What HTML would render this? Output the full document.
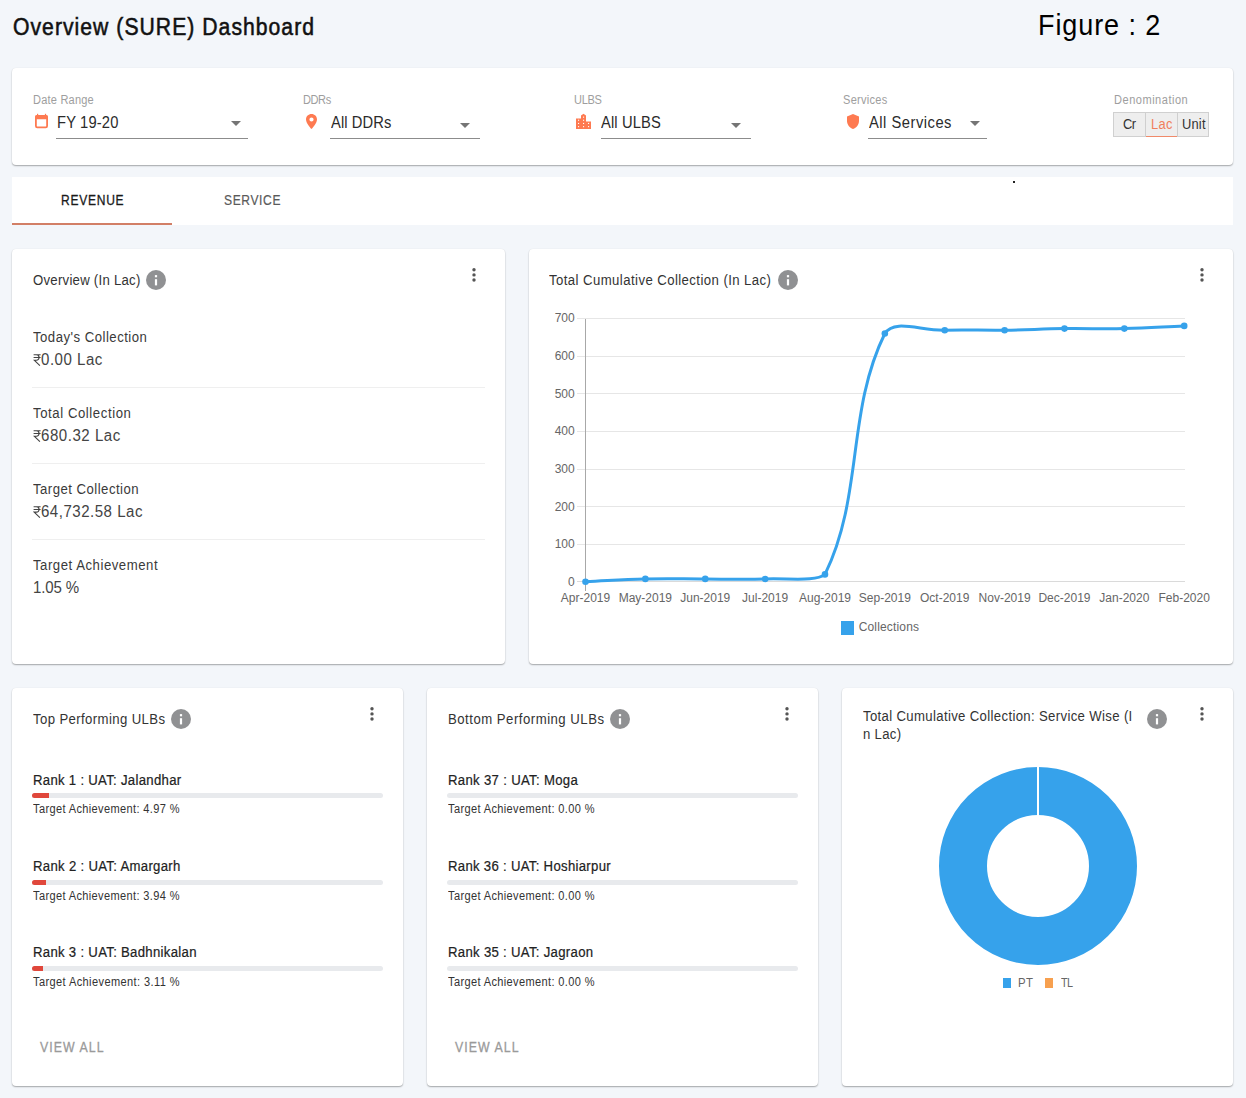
<!DOCTYPE html>
<html><head><meta charset="utf-8"><style>
html,body{margin:0;padding:0;}
body{width:1246px;height:1098px;background:#f3f6fa;position:relative;overflow:hidden;font-family:"Liberation Sans", sans-serif;}
.t{position:absolute;white-space:nowrap;}
</style></head><body>
<div class="t" style="left:13.00px;top:12.65px;font-size:23.5px;line-height:28.20px;color:#111;letter-spacing:1.148px;-webkit-text-stroke:0.55px #111;transform:scaleX(0.9);transform-origin:0 0;">Overview (SURE) Dashboard</div>
<div class="t" style="left:1038.40px;top:6.80px;font-size:30px;line-height:36.00px;color:#000;letter-spacing:1.021px;transform:scaleX(0.9);transform-origin:0 0;">Figure : 2</div>
<div style="position:absolute;left:12px;top:68px;width:1221px;height:97px;background:#fff;border-radius:4px;box-shadow:0 1px 1.5px rgba(0,0,0,.32),0 0 1px rgba(0,0,0,.08);"></div>
<div class="t" style="left:32.50px;top:92.94px;font-size:12px;line-height:14.40px;color:#9e9e9e;letter-spacing:0.220px;transform:scaleX(0.92);transform-origin:0 0;">Date Range</div>
<div class="t" style="left:303.10px;top:92.94px;font-size:12px;line-height:14.40px;color:#9e9e9e;letter-spacing:-0.449px;transform:scaleX(0.92);transform-origin:0 0;">DDRs</div>
<div class="t" style="left:573.50px;top:92.94px;font-size:12px;line-height:14.40px;color:#9e9e9e;letter-spacing:-0.361px;transform:scaleX(0.92);transform-origin:0 0;">ULBS</div>
<div class="t" style="left:843.40px;top:92.94px;font-size:12px;line-height:14.40px;color:#9e9e9e;letter-spacing:0.292px;transform:scaleX(0.92);transform-origin:0 0;">Services</div>
<div class="t" style="left:1113.70px;top:92.94px;font-size:12px;line-height:14.40px;color:#9e9e9e;letter-spacing:0.555px;transform:scaleX(0.92);transform-origin:0 0;">Denomination</div>
<div class="t" style="left:56.60px;top:112.65px;font-size:16px;line-height:19.20px;color:#2b2b2b;letter-spacing:0.161px;transform:scaleX(0.92);transform-origin:0 0;">FY 19-20</div>
<div class="t" style="left:330.80px;top:112.65px;font-size:16px;line-height:19.20px;color:#2b2b2b;letter-spacing:0.092px;transform:scaleX(0.92);transform-origin:0 0;">All DDRs</div>
<div class="t" style="left:601.30px;top:112.65px;font-size:16px;line-height:19.20px;color:#2b2b2b;letter-spacing:0.143px;transform:scaleX(0.92);transform-origin:0 0;">All ULBS</div>
<div class="t" style="left:868.60px;top:112.65px;font-size:16px;line-height:19.20px;color:#2b2b2b;letter-spacing:0.552px;transform:scaleX(0.92);transform-origin:0 0;">All Services</div>
<div style="position:absolute;left:56px;top:138px;width:192px;height:1px;background:#8c8c8c;"></div>
<div style="position:absolute;left:330px;top:138px;width:150px;height:1px;background:#8c8c8c;"></div>
<div style="position:absolute;left:601px;top:138px;width:150px;height:1px;background:#8c8c8c;"></div>
<div style="position:absolute;left:868px;top:138px;width:119px;height:1px;background:#8c8c8c;"></div>
<div style="position:absolute;left:231px;top:121px;width:0;height:0;border-left:5px solid transparent;border-right:5px solid transparent;border-top:5px solid #757575;"></div>
<div style="position:absolute;left:460px;top:123px;width:0;height:0;border-left:5px solid transparent;border-right:5px solid transparent;border-top:5px solid #757575;"></div>
<div style="position:absolute;left:731px;top:123px;width:0;height:0;border-left:5px solid transparent;border-right:5px solid transparent;border-top:5px solid #757575;"></div>
<div style="position:absolute;left:970px;top:121px;width:0;height:0;border-left:5px solid transparent;border-right:5px solid transparent;border-top:5px solid #757575;"></div>
<svg style="position:absolute;left:35px;top:113px" width="14" height="16" viewBox="0 0 14 16">
<rect x="0.9" y="2.9" width="11.2" height="11.5" rx="1.3" fill="none" stroke="#fe7a51" stroke-width="1.8"/>
<rect x="0.3" y="2.2" width="12.4" height="4" rx="1" fill="#fe7a51"/>
<rect x="2" y="0.8" width="1.2" height="2" fill="#fe7a51"/><rect x="9.9" y="0.8" width="1.2" height="2" fill="#fe7a51"/>
</svg>
<svg style="position:absolute;left:305px;top:113px" width="13" height="17" viewBox="0 0 13 17">
<path d="M6.5 1C3.4 1 1 3.4 1 6.4c0 3.9 5.5 9.6 5.5 9.6S12 10.3 12 6.4C12 3.4 9.6 1 6.5 1z M6.5 8.6a2.1 2.1 0 1 1 0-4.2a2.1 2.1 0 0 1 0 4.2z" fill="#fe7a51" fill-rule="evenodd"/>
</svg>
<svg style="position:absolute;left:575px;top:113px" width="17" height="17" viewBox="0 0 17 17">
<path d="M1 5.5h5V2.5L8.5 0.8L11 2.5V8.5h5V16H1z" fill="#fe7a51"/>
<g fill="#fff">
<rect x="8" y="3.6" width="1.1" height="1.1"/>
<rect x="3" y="6.7" width="1.1" height="1.1"/><rect x="8" y="6.7" width="1.1" height="1.1"/>
<rect x="3" y="9.9" width="1.1" height="1.1"/><rect x="8" y="9.9" width="1.1" height="1.1"/><rect x="13" y="9.9" width="1.1" height="1.1"/>
<rect x="3" y="13.1" width="1.1" height="1.1"/><rect x="8" y="13.1" width="1.1" height="1.1"/><rect x="13" y="13.1" width="1.1" height="1.1"/>
</g></svg>
<svg style="position:absolute;left:846px;top:113px" width="14" height="17" viewBox="0 0 14 17">
<path d="M7 1L13 3.5V8c0 3.6-2.6 6.9-6 8C3.6 14.9 1 11.6 1 8V3.5z" fill="#fe7a51"/>
</svg>
<div style="position:absolute;left:1113px;top:112px;width:96px;height:25px;box-sizing:border-box;border:1px solid #d0d0d0;background:#eeeeee;"></div>
<div style="position:absolute;left:1144.5px;top:113px;width:1px;height:23px;background:#cfcfcf;"></div>
<div style="position:absolute;left:1176.5px;top:113px;width:1px;height:23px;background:#cfcfcf;"></div>
<div style="position:absolute;left:1145.5px;top:135.5px;width:31px;height:1px;background:#f08a6a;"></div>
<div class="t" style="left:1123.00px;top:115.95px;font-size:14px;line-height:16.80px;color:#333;letter-spacing:-0.670px;transform:scaleX(0.92);transform-origin:0 0;">Cr</div>
<div class="t" style="left:1150.60px;top:115.95px;font-size:14px;line-height:16.80px;color:#f07e5c;letter-spacing:0.330px;transform:scaleX(0.92);transform-origin:0 0;">Lac</div>
<div class="t" style="left:1181.50px;top:115.95px;font-size:14px;line-height:16.80px;color:#333;letter-spacing:0.214px;transform:scaleX(0.92);transform-origin:0 0;">Unit</div>
<div style="position:absolute;left:12px;top:177px;width:1221px;height:48px;background:#fff;"></div>
<div style="position:absolute;left:12px;top:223px;width:160px;height:2px;background:#d27f66;"></div>
<div class="t" style="left:60.70px;top:192.05px;font-size:14px;line-height:16.80px;color:#1a1a1a;letter-spacing:0.848px;-webkit-text-stroke:0.3px #1a1a1a;transform:scaleX(0.86);transform-origin:0 0;">REVENUE</div>
<div class="t" style="left:223.60px;top:192.05px;font-size:14px;line-height:16.80px;color:#5a5a5a;letter-spacing:0.730px;-webkit-text-stroke:0.2px #5a5a5a;transform:scaleX(0.86);transform-origin:0 0;">SERVICE</div>
<div style="position:absolute;left:1013px;top:181px;width:2px;height:2px;background:#222;"></div>
<div style="position:absolute;left:12px;top:249px;width:493px;height:415px;background:#fff;border-radius:4px;box-shadow:0 1px 1.5px rgba(0,0,0,.32),0 0 1px rgba(0,0,0,.08);"></div>
<div class="t" style="left:32.70px;top:271.65px;font-size:14px;line-height:16.80px;color:#333;letter-spacing:0.278px;transform:scaleX(0.94);transform-origin:0 0;">Overview (In Lac)</div>
<svg style="position:absolute;left:146px;top:269.7px" width="20" height="20" viewBox="0 0 20 20">
<circle cx="10" cy="10" r="10" fill="#909193"/><rect x="8.9" y="9.2" width="2.2" height="6.2" fill="#fff"/><rect x="8.9" y="5.1" width="2.2" height="2.2" fill="#fff"/></svg>
<svg style="position:absolute;left:471.0px;top:267.1px" width="6" height="16" viewBox="0 0 6 16">
<circle cx="3" cy="2.7" r="1.7" fill="#555"/><circle cx="3" cy="7.9" r="1.7" fill="#555"/><circle cx="3" cy="13" r="1.7" fill="#555"/></svg>
<div class="t" style="left:33.00px;top:328.75px;font-size:14px;line-height:16.80px;color:#3a3a3a;letter-spacing:0.516px;transform:scaleX(0.94);transform-origin:0 0;">Today's Collection</div>
<svg style="position:absolute;left:32.5px;top:353.5px" width="9" height="12" viewBox="0 0 9 12">
<path d="M0.6 0.7H7.6M0.6 3.5H7.6M2.4 0.7H3.4C6.9 0.7 6.9 6.2 3.4 6.2H1.2L6.9 11.6" fill="none" stroke="#444" stroke-width="1.15"/></svg>
<div class="t" style="left:40.60px;top:349.55px;font-size:16px;line-height:19.20px;color:#444;letter-spacing:0.560px;transform:scaleX(0.94);transform-origin:0 0;">0.00 Lac</div>
<div style="position:absolute;left:32px;top:387px;width:453px;height:1px;background:#efefef;"></div>
<div class="t" style="left:33.00px;top:404.75px;font-size:14px;line-height:16.80px;color:#3a3a3a;letter-spacing:0.610px;transform:scaleX(0.94);transform-origin:0 0;">Total Collection</div>
<svg style="position:absolute;left:32.5px;top:429.5px" width="9" height="12" viewBox="0 0 9 12">
<path d="M0.6 0.7H7.6M0.6 3.5H7.6M2.4 0.7H3.4C6.9 0.7 6.9 6.2 3.4 6.2H1.2L6.9 11.6" fill="none" stroke="#444" stroke-width="1.15"/></svg>
<div class="t" style="left:40.60px;top:425.55px;font-size:16px;line-height:19.20px;color:#444;letter-spacing:0.562px;transform:scaleX(0.94);transform-origin:0 0;">680.32 Lac</div>
<div style="position:absolute;left:32px;top:463px;width:453px;height:1px;background:#efefef;"></div>
<div class="t" style="left:33.00px;top:480.75px;font-size:14px;line-height:16.80px;color:#3a3a3a;letter-spacing:0.503px;transform:scaleX(0.94);transform-origin:0 0;">Target Collection</div>
<svg style="position:absolute;left:32.5px;top:505.5px" width="9" height="12" viewBox="0 0 9 12">
<path d="M0.6 0.7H7.6M0.6 3.5H7.6M2.4 0.7H3.4C6.9 0.7 6.9 6.2 3.4 6.2H1.2L6.9 11.6" fill="none" stroke="#444" stroke-width="1.15"/></svg>
<div class="t" style="left:40.60px;top:501.55px;font-size:16px;line-height:19.20px;color:#444;letter-spacing:0.539px;transform:scaleX(0.94);transform-origin:0 0;">64,732.58 Lac</div>
<div style="position:absolute;left:32px;top:539px;width:453px;height:1px;background:#efefef;"></div>
<div class="t" style="left:33.00px;top:556.75px;font-size:14px;line-height:16.80px;color:#3a3a3a;letter-spacing:0.562px;transform:scaleX(0.94);transform-origin:0 0;">Target Achievement</div>
<div class="t" style="left:33.00px;top:577.55px;font-size:16px;line-height:19.20px;color:#444;letter-spacing:-0.173px;transform:scaleX(0.94);transform-origin:0 0;">1.05 %</div>
<div style="position:absolute;left:529px;top:249px;width:704px;height:415px;background:#fff;border-radius:4px;box-shadow:0 1px 1.5px rgba(0,0,0,.32),0 0 1px rgba(0,0,0,.08);"></div>
<div class="t" style="left:549.00px;top:271.65px;font-size:14px;line-height:16.80px;color:#333;letter-spacing:0.456px;transform:scaleX(0.94);transform-origin:0 0;">Total Cumulative Collection (In Lac)</div>
<svg style="position:absolute;left:778px;top:269.7px" width="20" height="20" viewBox="0 0 20 20">
<circle cx="10" cy="10" r="10" fill="#909193"/><rect x="8.9" y="9.2" width="2.2" height="6.2" fill="#fff"/><rect x="8.9" y="5.1" width="2.2" height="2.2" fill="#fff"/></svg>
<svg style="position:absolute;left:1199.0px;top:267.1px" width="6" height="16" viewBox="0 0 6 16">
<circle cx="3" cy="2.7" r="1.7" fill="#555"/><circle cx="3" cy="7.9" r="1.7" fill="#555"/><circle cx="3" cy="13" r="1.7" fill="#555"/></svg>
<div style="position:absolute;left:577px;top:581px;width:607.5px;height:1px;background:#e6e6e6;"></div>
<div class="t" style="left:568.00px;top:574.84px;font-size:12px;line-height:14.40px;color:#666;">0</div>
<div style="position:absolute;left:577px;top:544px;width:607.5px;height:1px;background:#e6e6e6;"></div>
<div class="t" style="left:554.70px;top:537.21px;font-size:12px;line-height:14.40px;color:#666;">100</div>
<div style="position:absolute;left:577px;top:506px;width:607.5px;height:1px;background:#e6e6e6;"></div>
<div class="t" style="left:554.70px;top:499.58px;font-size:12px;line-height:14.40px;color:#666;">200</div>
<div style="position:absolute;left:577px;top:469px;width:607.5px;height:1px;background:#e6e6e6;"></div>
<div class="t" style="left:554.70px;top:461.95px;font-size:12px;line-height:14.40px;color:#666;">300</div>
<div style="position:absolute;left:577px;top:431px;width:607.5px;height:1px;background:#e6e6e6;"></div>
<div class="t" style="left:554.70px;top:424.33px;font-size:12px;line-height:14.40px;color:#666;">400</div>
<div style="position:absolute;left:577px;top:393px;width:607.5px;height:1px;background:#e6e6e6;"></div>
<div class="t" style="left:554.70px;top:386.70px;font-size:12px;line-height:14.40px;color:#666;">500</div>
<div style="position:absolute;left:577px;top:356px;width:607.5px;height:1px;background:#e6e6e6;"></div>
<div class="t" style="left:554.70px;top:349.07px;font-size:12px;line-height:14.40px;color:#666;">600</div>
<div style="position:absolute;left:577px;top:318px;width:607.5px;height:1px;background:#e6e6e6;"></div>
<div class="t" style="left:554.70px;top:311.44px;font-size:12px;line-height:14.40px;color:#666;">700</div>
<div style="position:absolute;left:585px;top:318.5px;width:1px;height:272px;background:#a8a8a8;"></div>
<div style="position:absolute;left:577px;top:581px;width:608px;height:1px;background:#dadada;"></div>
<div class="t" style="left:560.80px;top:591.44px;font-size:12px;line-height:14.40px;color:#666;">Apr-2019</div>
<div class="t" style="left:618.67px;top:591.44px;font-size:12px;line-height:14.40px;color:#666;">May-2019</div>
<div class="t" style="left:680.24px;top:591.44px;font-size:12px;line-height:14.40px;color:#666;">Jun-2019</div>
<div class="t" style="left:742.11px;top:591.44px;font-size:12px;line-height:14.40px;color:#666;">Jul-2019</div>
<div class="t" style="left:798.98px;top:591.44px;font-size:12px;line-height:14.40px;color:#666;">Aug-2019</div>
<div class="t" style="left:858.85px;top:591.44px;font-size:12px;line-height:14.40px;color:#666;">Sep-2019</div>
<div class="t" style="left:920.02px;top:591.44px;font-size:12px;line-height:14.40px;color:#666;">Oct-2019</div>
<div class="t" style="left:978.59px;top:591.44px;font-size:12px;line-height:14.40px;color:#666;">Nov-2019</div>
<div class="t" style="left:1038.46px;top:591.44px;font-size:12px;line-height:14.40px;color:#666;">Dec-2019</div>
<div class="t" style="left:1099.33px;top:591.44px;font-size:12px;line-height:14.40px;color:#666;">Jan-2020</div>
<div class="t" style="left:1158.50px;top:591.44px;font-size:12px;line-height:14.40px;color:#666;">Feb-2020</div>
<svg style="position:absolute;left:0;top:0" width="1246" height="1098"><path d="M585.50 581.71 C609.45 580.58 621.41 579.45 645.37 578.89 C669.30 578.33 681.29 578.87 705.24 578.89 C729.19 578.90 741.20 579.86 765.11 578.96 C789.09 578.07 815.65 581.90 824.98 574.41 C863.55 495.35 846.27 412.19 884.85 333.51 C894.17 318.50 920.75 330.87 944.72 330.20 C968.65 329.54 980.65 330.52 1004.59 330.20 C1028.54 329.89 1040.51 328.94 1064.46 328.62 C1088.40 328.31 1100.39 329.17 1124.33 328.62 C1148.29 328.08 1160.25 326.99 1184.20 325.91" fill="none" stroke="#36a2eb" stroke-width="3"/><g fill="#36a2eb"><circle cx="585.50" cy="581.71" r="3.3"/><circle cx="645.37" cy="578.89" r="3.3"/><circle cx="705.24" cy="578.89" r="3.3"/><circle cx="765.11" cy="578.96" r="3.3"/><circle cx="824.98" cy="574.41" r="3.3"/><circle cx="884.85" cy="333.51" r="3.3"/><circle cx="944.72" cy="330.20" r="3.3"/><circle cx="1004.59" cy="330.20" r="3.3"/><circle cx="1064.46" cy="328.62" r="3.3"/><circle cx="1124.33" cy="328.62" r="3.3"/><circle cx="1184.20" cy="325.91" r="3.3"/></g></svg>
<div style="position:absolute;left:841px;top:621px;width:13px;height:14px;background:#36a2eb;"></div>
<div class="t" style="left:858.70px;top:620.14px;font-size:12px;line-height:14.40px;color:#666;letter-spacing:0.160px;">Collections</div>
<div style="position:absolute;left:12px;top:688px;width:391px;height:398px;background:#fff;border-radius:4px;box-shadow:0 1px 1.5px rgba(0,0,0,.32),0 0 1px rgba(0,0,0,.08);"></div>
<div class="t" style="left:33.00px;top:711.15px;font-size:14px;line-height:16.80px;color:#333;letter-spacing:0.407px;transform:scaleX(0.94);transform-origin:0 0;">Top Performing ULBs</div>
<svg style="position:absolute;left:171px;top:709px" width="20" height="20" viewBox="0 0 20 20">
<circle cx="10" cy="10" r="10" fill="#909193"/><rect x="8.9" y="9.2" width="2.2" height="6.2" fill="#fff"/><rect x="8.9" y="5.1" width="2.2" height="2.2" fill="#fff"/></svg>
<svg style="position:absolute;left:369.0px;top:706.1px" width="6" height="16" viewBox="0 0 6 16">
<circle cx="3" cy="2.7" r="1.7" fill="#555"/><circle cx="3" cy="7.9" r="1.7" fill="#555"/><circle cx="3" cy="13" r="1.7" fill="#555"/></svg>
<div class="t" style="left:32.70px;top:771.65px;font-size:14px;line-height:16.80px;color:#222;letter-spacing:0.313px;-webkit-text-stroke:0.2px #222;transform:scaleX(0.94);transform-origin:0 0;">Rank 1 : UAT: Jalandhar</div>
<div style="position:absolute;left:32px;top:793px;width:351px;height:5px;background:#e8eaed;border-radius:3px;"></div>
<div style="position:absolute;left:32px;top:793px;width:17px;height:5px;background:#e0473b;border-radius:3px 0 0 3px;"></div>
<div class="t" style="left:32.50px;top:802.44px;font-size:12px;line-height:14.40px;color:#333;letter-spacing:0.394px;transform:scaleX(0.92);transform-origin:0 0;">Target Achievement: 4.97 %</div>
<div class="t" style="left:32.70px;top:857.65px;font-size:14px;line-height:16.80px;color:#222;letter-spacing:0.327px;-webkit-text-stroke:0.2px #222;transform:scaleX(0.94);transform-origin:0 0;">Rank 2 : UAT: Amargarh</div>
<div style="position:absolute;left:32px;top:880px;width:351px;height:5px;background:#e8eaed;border-radius:3px;"></div>
<div style="position:absolute;left:32px;top:880px;width:14px;height:5px;background:#e0473b;border-radius:3px 0 0 3px;"></div>
<div class="t" style="left:32.50px;top:888.89px;font-size:12px;line-height:14.40px;color:#333;letter-spacing:0.394px;transform:scaleX(0.92);transform-origin:0 0;">Target Achievement: 3.94 %</div>
<div class="t" style="left:32.70px;top:943.65px;font-size:14px;line-height:16.80px;color:#222;letter-spacing:0.317px;-webkit-text-stroke:0.2px #222;transform:scaleX(0.94);transform-origin:0 0;">Rank 3 : UAT: Badhnikalan</div>
<div style="position:absolute;left:32px;top:966px;width:351px;height:5px;background:#e8eaed;border-radius:3px;"></div>
<div style="position:absolute;left:32px;top:966px;width:11px;height:5px;background:#e0473b;border-radius:3px 0 0 3px;"></div>
<div class="t" style="left:32.50px;top:975.34px;font-size:12px;line-height:14.40px;color:#333;letter-spacing:0.430px;transform:scaleX(0.92);transform-origin:0 0;">Target Achievement: 3.11 %</div>
<div class="t" style="left:40.20px;top:1038.75px;font-size:14px;line-height:16.80px;color:#9a9a9a;letter-spacing:1.210px;-webkit-text-stroke:0.3px #9a9a9a;transform:scaleX(0.88);transform-origin:0 0;">VIEW ALL</div>
<div style="position:absolute;left:427px;top:688px;width:391px;height:398px;background:#fff;border-radius:4px;box-shadow:0 1px 1.5px rgba(0,0,0,.32),0 0 1px rgba(0,0,0,.08);"></div>
<div class="t" style="left:448.00px;top:711.15px;font-size:14px;line-height:16.80px;color:#333;letter-spacing:0.531px;transform:scaleX(0.94);transform-origin:0 0;">Bottom Performing ULBs</div>
<svg style="position:absolute;left:610px;top:709px" width="20" height="20" viewBox="0 0 20 20">
<circle cx="10" cy="10" r="10" fill="#909193"/><rect x="8.9" y="9.2" width="2.2" height="6.2" fill="#fff"/><rect x="8.9" y="5.1" width="2.2" height="2.2" fill="#fff"/></svg>
<svg style="position:absolute;left:784.0px;top:706.1px" width="6" height="16" viewBox="0 0 6 16">
<circle cx="3" cy="2.7" r="1.7" fill="#555"/><circle cx="3" cy="7.9" r="1.7" fill="#555"/><circle cx="3" cy="13" r="1.7" fill="#555"/></svg>
<div class="t" style="left:447.70px;top:771.65px;font-size:14px;line-height:16.80px;color:#222;letter-spacing:0.335px;-webkit-text-stroke:0.2px #222;transform:scaleX(0.94);transform-origin:0 0;">Rank 37 : UAT: Moga</div>
<div style="position:absolute;left:447px;top:793px;width:351px;height:5px;background:#e8eaed;border-radius:3px;"></div>
<div class="t" style="left:447.50px;top:802.44px;font-size:12px;line-height:14.40px;color:#333;letter-spacing:0.394px;transform:scaleX(0.92);transform-origin:0 0;">Target Achievement: 0.00 %</div>
<div class="t" style="left:447.70px;top:857.65px;font-size:14px;line-height:16.80px;color:#222;letter-spacing:0.315px;-webkit-text-stroke:0.2px #222;transform:scaleX(0.94);transform-origin:0 0;">Rank 36 : UAT: Hoshiarpur</div>
<div style="position:absolute;left:447px;top:880px;width:351px;height:5px;background:#e8eaed;border-radius:3px;"></div>
<div class="t" style="left:447.50px;top:888.89px;font-size:12px;line-height:14.40px;color:#333;letter-spacing:0.394px;transform:scaleX(0.92);transform-origin:0 0;">Target Achievement: 0.00 %</div>
<div class="t" style="left:447.70px;top:943.65px;font-size:14px;line-height:16.80px;color:#222;letter-spacing:0.322px;-webkit-text-stroke:0.2px #222;transform:scaleX(0.94);transform-origin:0 0;">Rank 35 : UAT: Jagraon</div>
<div style="position:absolute;left:447px;top:966px;width:351px;height:5px;background:#e8eaed;border-radius:3px;"></div>
<div class="t" style="left:447.50px;top:975.34px;font-size:12px;line-height:14.40px;color:#333;letter-spacing:0.394px;transform:scaleX(0.92);transform-origin:0 0;">Target Achievement: 0.00 %</div>
<div class="t" style="left:455.20px;top:1038.75px;font-size:14px;line-height:16.80px;color:#9a9a9a;letter-spacing:1.210px;-webkit-text-stroke:0.3px #9a9a9a;transform:scaleX(0.88);transform-origin:0 0;">VIEW ALL</div>
<div style="position:absolute;left:842px;top:688px;width:391px;height:398px;background:#fff;border-radius:4px;box-shadow:0 1px 1.5px rgba(0,0,0,.32),0 0 1px rgba(0,0,0,.08);"></div>
<div class="t" style="left:863.20px;top:707.95px;font-size:14px;line-height:16.80px;color:#333;letter-spacing:0.365px;transform:scaleX(0.94);transform-origin:0 0;">Total Cumulative Collection: Service Wise (I</div>
<div class="t" style="left:863.20px;top:726.25px;font-size:14px;line-height:16.80px;color:#333;letter-spacing:0.331px;transform:scaleX(0.94);transform-origin:0 0;">n Lac)</div>
<svg style="position:absolute;left:1147px;top:709px" width="20" height="20" viewBox="0 0 20 20">
<circle cx="10" cy="10" r="10" fill="#909193"/><rect x="8.9" y="9.2" width="2.2" height="6.2" fill="#fff"/><rect x="8.9" y="5.1" width="2.2" height="2.2" fill="#fff"/></svg>
<svg style="position:absolute;left:1199.0px;top:706.1px" width="6" height="16" viewBox="0 0 6 16">
<circle cx="3" cy="2.7" r="1.7" fill="#555"/><circle cx="3" cy="7.9" r="1.7" fill="#555"/><circle cx="3" cy="13" r="1.7" fill="#555"/></svg>
<svg style="position:absolute;left:938px;top:766px" width="200" height="200" viewBox="0 0 200 200">
<circle cx="100" cy="100" r="75" fill="none" stroke="#36a2eb" stroke-width="48"/>
<line x1="100" y1="0" x2="100" y2="50" stroke="#fff" stroke-width="2"/></svg>
<div style="position:absolute;left:1003px;top:978.4px;width:8px;height:10px;background:#36a2eb;"></div>
<div class="t" style="left:1018.00px;top:976.44px;font-size:12px;line-height:14.40px;color:#666;letter-spacing:0.489px;transform:scaleX(0.95);transform-origin:0 0;">PT</div>
<div style="position:absolute;left:1044.5px;top:978.4px;width:8px;height:10px;background:#f7a04f;"></div>
<div class="t" style="left:1061.40px;top:976.44px;font-size:12px;line-height:14.40px;color:#666;letter-spacing:-0.556px;transform:scaleX(0.9);transform-origin:0 0;">TL</div>
</body></html>
